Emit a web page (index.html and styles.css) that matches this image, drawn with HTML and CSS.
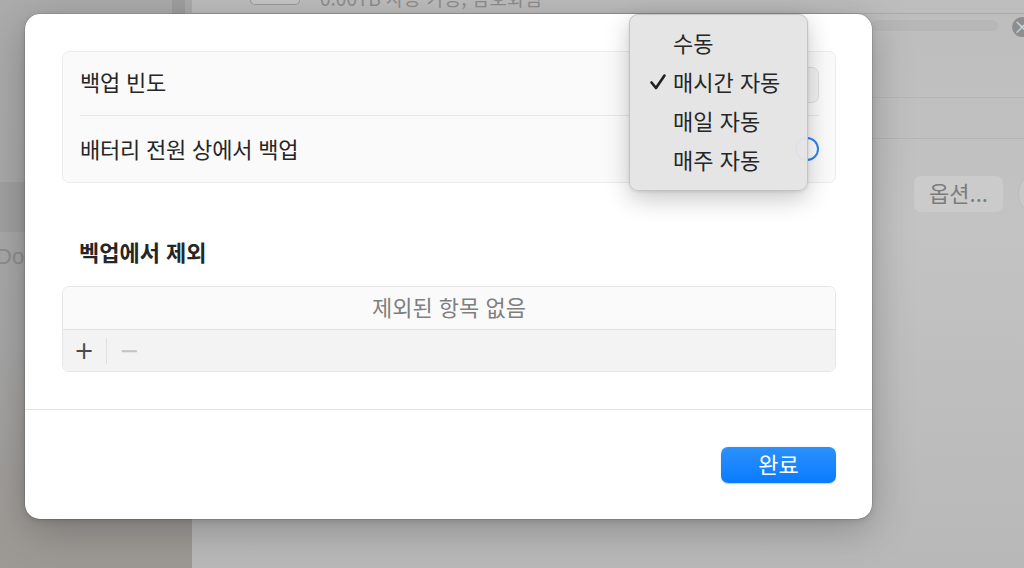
FILE: index.html
```html
<!DOCTYPE html>
<html lang="ko">
<head>
<meta charset="utf-8">
<link rel="stylesheet" href="styles.css">
</head>
<body>
<div class="desktop">
  <aside class="sidebar">
    <div class="side-top"><div class="side-scroll"></div></div>
    <div class="side-item"></div>
    <div class="side-text">Doc</div>
  </aside>
  <main class="main">
    <div class="main-top">
      <div class="drive"></div>
      <div class="drive-text">0.00TB 사용 가능, 암호화됨</div>
    </div>
    <div class="main-status">
      <div class="progress"></div>
      <div class="close-dot">×</div>
    </div>
    <div class="band"></div>
    <div class="main-buttons">
      <div class="bg-btn">옵션...</div>
      <div class="bg-btn partial"></div>
    </div>
  </main>
</div>

<div class="modal">
  <div class="modal-content">
    <div class="group">
      <div class="row first">
        <span class="row-label">백업 빈도</span>
        <div class="popup-btn"></div>
      </div>
      <div class="row second">
        <span class="row-label">배터리 전원 상에서 백업</span>
        <div class="switch-knob"></div>
      </div>
    </div>
    <h2 class="section-title">벡업에서 제외</h2>
    <div class="table">
      <div class="table-body">제외된 항목 없음</div>
      <div class="table-bar">
        <span class="tb-btn plus">+</span>
        <span class="tb-sep"></span>
        <span class="tb-btn minus">−</span>
      </div>
    </div>
  </div>
  <div class="modal-footer">
    <button class="done">완료</button>
  </div>
</div>

<div class="menu">
  <div class="menu-item">수동</div>
  <div class="menu-item checked">
    <svg class="check" viewBox="0 0 18 18" width="18" height="18"><path d="M2.5 9.5 L7 15 L15.5 2.5" fill="none" stroke="#1f1f1f" stroke-width="2.6" stroke-linecap="round" stroke-linejoin="round"/></svg>
    매시간 자동
  </div>
  <div class="menu-item">매일 자동</div>
  <div class="menu-item">매주 자동</div>
</div>
</body>
</html>
```
FILE: styles.css
```css
* { box-sizing: border-box; }
html, body {
  margin: 0;
  padding: 0;
  width: 1024px;
  height: 568px;
  overflow: hidden;
  font-family: "Noto Sans CJK KR", "Noto Sans", sans-serif;
}
body { position: relative; background: #b8b8b8; }

.desktop {
  display: flex;
  width: 1024px;
  height: 568px;
}
.sidebar {
  width: 192px;
  background: linear-gradient(180deg, #acacac 0%, #a6a6a6 60%, #9c9893 100%);
  display: flex;
  flex-direction: column;
}
.side-top {
  height: 182px;
  display: flex;
  justify-content: flex-end;
  padding-right: 7px;
}
.side-scroll { width: 13px; height: 100%; background: #9f9f9f; }
.side-item { height: 50px; background: #a0a0a0; }
.side-text {
  padding-top: 12px;
  margin-left: -4px;
  font-family: "Liberation Sans", sans-serif;
  font-size: 22px;
  color: #8d8d8d;
}
.main {
  flex: 1;
  background: linear-gradient(180deg, #bdbdbd 0%, #c3c3c3 40%, #b8b8b8 100%);
  display: flex;
  flex-direction: column;
}
.main-top {
  height: 14px;
  display: flex;
  align-items: flex-start;
  gap: 20px;
  padding-left: 58px;
  overflow: hidden;
  border-bottom: 1px solid #a9a9a9;
}
.drive {
  width: 50px; height: 5px;
  border: 1px solid #9a9a9a;
  border-top: none;
  border-radius: 0 0 6px 6px;
  background: #c6c6c6;
}
.drive-text {
  margin-top: -16px;
  font-size: 19px;
  color: #8e8e8e;
}
.main-status {
  height: 83px;
  display: flex;
  justify-content: flex-end;
  align-items: flex-start;
  padding-top: 6px;
  gap: 14px;
  margin-right: -8px;
}
.progress {
  width: 126px; height: 11px;
  border-radius: 6px;
  background: #b7b7b7;
}
.close-dot {
  width: 20px; height: 20px;
  border-radius: 50%;
  background: #8e8e8e;
  color: #d8d8d8;
  font-size: 18px;
  line-height: 19px;
  text-align: center;
  margin-top: -3px;
}
.band {
  height: 42px;
  border-top: 1px solid #b5b5b5;
  border-bottom: 1px solid #b5b5b5;
  background: #c0c0c0;
}
.main-buttons {
  display: flex;
  justify-content: flex-end;
  gap: 15px;
  padding-top: 37px;
  margin-right: -20px;
}
.bg-btn {
  width: 89px; height: 36px;
  border-radius: 7px;
  background: #cbcbcb;
  color: #7c7c7c;
  font-size: 22px;
  line-height: 33px;
  text-align: center;
}
.bg-btn.partial { width: 26px; border-radius: 50% 0 0 50%; background: #c8c8c8; border: 1px solid #bcbcbc; }

/* Modal */
.modal {
  position: absolute;
  left: 25px;
  top: 14px;
  width: 847px;
  height: 505px;
  background: #ffffff;
  border-radius: 15px;
  box-shadow: 0 0 0 0.5px rgba(0,0,0,0.18), 0 10px 40px rgba(0,0,0,0.25), 0 2px 6px rgba(0,0,0,0.12);
  display: flex;
  flex-direction: column;
}
.modal-content {
  height: 396px;
  padding: 37px 36px 0 37px;
  border-bottom: 1px solid #e4e4e4;
}
.group {
  background: #fafafa;
  border: 1px solid #ececec;
  border-radius: 7px;
  height: 132px;
  padding: 0 16px 0 17px;
  display: flex;
  flex-direction: column;
}
.row {
  height: 64px;
  display: flex;
  align-items: center;
  justify-content: space-between;
  border-bottom: 1px solid #e6e6e6;
}
.row.second { flex: 1; border-bottom: none; }
.row-label {
  font-size: 22px;
  color: #262626;
  letter-spacing: -0.2px;
}
.row.first .row-label { margin-bottom: 6px; }
.row.second .row-label { margin-bottom: 2px; }
.popup-btn {
  width: 180px;
  height: 36px;
  border-radius: 7px;
  background: #f2f2f2;
  border: 1px solid #dddddd;
  margin-top: 2px;
}
.switch-knob {
  width: 24px; height: 24px;
  border-radius: 50%;
  border: 2px solid #2e86ec;
  background: #ffffff;
}
.section-title {
  margin: 52px 0 0 17px;
  height: 51px;
  font-size: 22px;
  font-weight: 700;
  color: #262626;
  line-height: 32px;
}
.table {
  border: 1px solid #e6e6e6;
  border-radius: 7px;
  overflow: hidden;
  height: 86px;
  display: flex;
  flex-direction: column;
}
.table-body {
  height: 43px;
  background: #fafafa;
  text-align: center;
  font-size: 22px;
  line-height: 38px;
  color: #7f7f7f;
  border-bottom: 1px solid #e2e2e2;
}
.table-bar {
  flex: 1;
  background: #f3f3f3;
  display: flex;
  align-items: center;
  padding-left: 10px;
}
.tb-btn {
  width: 22px;
  text-align: center;
  font-family: "DejaVu Sans", sans-serif;
  font-size: 24px;
  line-height: 24px;
}
.tb-btn.plus { color: #4a4a4a; }
.tb-btn.minus { color: #c4c4c4; }
.tb-sep {
  width: 1px;
  height: 26px;
  background: #e0e0e0;
  margin: 0 11px 0 11px;
}
.modal-footer {
  flex: 1;
  display: flex;
  justify-content: flex-end;
  align-items: flex-start;
  padding: 37px 36px 0 0;
}
.done {
  width: 115px;
  height: 36px;
  border: none;
  border-radius: 7px;
  background: linear-gradient(180deg, #2b91fb 0%, #0a7bff 100%);
  box-shadow: 0 0.5px 1.5px rgba(0,0,0,0.2);
  color: #ffffff;
  font-family: "Noto Sans CJK KR", sans-serif;
  font-size: 22px;
  line-height: 31px;
  padding: 0 0 3px 0;
}

/* Menu */
.menu {
  position: absolute;
  left: 629px;
  top: 14px;
  width: 179px;
  height: 177px;
  padding-top: 10px;
  background: rgba(228,228,228,0.97);
  border: 1px solid #c4c4c4;
  border-radius: 9px;
  box-shadow: 0 8px 24px rgba(0,0,0,0.22), 0 1px 3px rgba(0,0,0,0.1);
}
.menu-item {
  position: relative;
  height: 39px;
  line-height: 35px;
  padding-left: 43px;
  font-size: 22px;
  color: #262626;
}
.check {
  position: absolute;
  left: 19px;
  top: 9px;
}
```
